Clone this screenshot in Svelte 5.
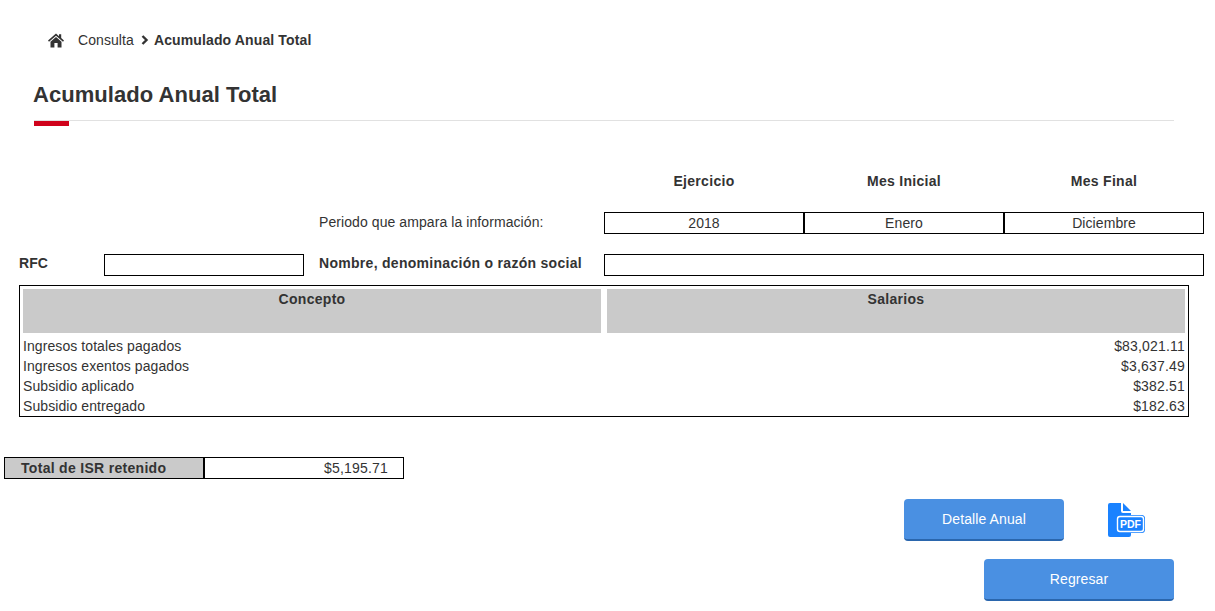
<script>
  let periodo = [
    { titulo: "Ejercicio", valor: "2018" },
    { titulo: "Mes Inicial", valor: "Enero" },
    { titulo: "Mes Final", valor: "Diciembre" },
  ];

  let filas = [
    { concepto: "Ingresos totales pagados", monto: "$83,021.11" },
    { concepto: "Ingresos exentos pagados", monto: "$3,637.49" },
    { concepto: "Subsidio aplicado", monto: "$382.51" },
    { concepto: "Subsidio entregado", monto: "$182.63" },
  ];
</script>

<div class="page">
  <nav class="breadcrumb">
    <svg class="home" viewBox="0 0 16 15" width="16" height="15">
      <path d="M8 0.5 L0 7.6 L1 8.8 L8 2.7 L15 8.8 L16 7.6 L13.2 5.1 V1.2 H11 V3.2 Z" fill="#333" />
      <path d="M8 4 L2.5 8.8 V14.5 H6.4 V10 H9.6 V14.5 H13.5 V8.8 Z" fill="#333" />
    </svg>
    <span class="link">Consulta</span>
    <svg class="chevron" viewBox="0 0 8 10" width="8" height="10">
      <path d="M1.5 1 L5.5 5 L1.5 9" fill="none" stroke="#333" stroke-width="2.4" />
    </svg>
    <strong>Acumulado Anual Total</strong>
  </nav>

  <h1>Acumulado Anual Total</h1>
  <div class="rule"><span></span></div>

  <div class="periodo-head">
    {#each periodo as p}
      <div class="col-title">{p.titulo}</div>
    {/each}
  </div>

  <div class="periodo-row">
    <div class="periodo-label">Periodo que ampara la información:</div>
    {#each periodo as p}
      <div class="box">{p.valor}</div>
    {/each}
  </div>

  <div class="rfc-row">
    <div class="rfc-label">RFC</div>
    <div class="box rfc-box"></div>
    <div class="nombre-label">Nombre, denominación o razón social</div>
    <div class="box nombre-box"></div>
  </div>

  <div class="tabla">
    <div class="tabla-head">
      <div>Concepto</div>
      <div>Salarios</div>
    </div>
    {#each filas as f}
      <div class="fila">
        <span>{f.concepto}</span>
        <span class="monto">{f.monto}</span>
      </div>
    {/each}
  </div>

  <div class="total">
    <div class="total-label">Total de ISR retenido</div>
    <div class="total-valor">$5,195.71</div>
  </div>

  <div class="acciones">
    <button class="btn detalle">Detalle Anual</button>
    <svg class="pdf" viewBox="0 0 37 34" width="37" height="34">
      <path d="M2 0 H13 V8 Q13 10 15 10 H23 V32 Q23 34 21 34 H2 Q0 34 0 32 V2 Q0 0 2 0 Z" fill="#1a82ff" />
      <path d="M15 0 L23 8 H15 Z" fill="#1a82ff" />
      <rect x="8" y="12" width="29" height="18" rx="3.5" fill="#1a82ff" />
      <rect x="9.5" y="13.5" width="26" height="15" rx="2.5" fill="#1a82ff" stroke="#fff" stroke-width="1.4" />
      <text x="22.5" y="25" text-anchor="middle" class="pdf-text">PDF</text>
    </svg>
  </div>

  <div class="regresar">
    <button class="btn">Regresar</button>
  </div>
</div>

<style>
  :global(body) {
    margin: 0;
    background: #fff;
  }

  .page {
    font-family: "Liberation Sans", Arial, sans-serif;
    font-size: 14px;
    letter-spacing: 0.08px;
    color: #333;
    height: 611px;
    overflow: hidden;
    box-sizing: border-box;
    padding-top: 32px;
  }

  .breadcrumb {
    display: flex;
    align-items: center;
    height: 16px;
    padding-left: 48px;
  }
  .home {
    margin-right: 14px;
  }
  .link {
    margin-right: 7px;
  }
  .chevron {
    margin-right: 5px;
  }
  .breadcrumb strong {
    letter-spacing: 0.13px;
  }

  h1 {
    margin: 34px 0 0 33px;
    font-size: 22px;
    line-height: 26px;
    font-weight: bold;
    letter-spacing: 0.05px;
  }

  .rule {
    margin: 12px 41px 0 34px;
    border-top: 1px solid #e1e1e1;
  }
  .rule span {
    display: block;
    width: 35px;
    height: 5px;
    background: #d0021b;
  }

  .periodo-head {
    display: flex;
    margin: 47px 0 0 604px;
  }
  .col-title {
    width: 200px;
    text-align: center;
    font-weight: bold;
    line-height: 16px;
    letter-spacing: 0.3px;
  }

  .periodo-row {
    display: flex;
    align-items: center;
    margin-top: 23px;
    padding-left: 319px;
  }
  .periodo-label {
    width: 285px;
    margin-top: -3px;
  }

  .box {
    box-sizing: border-box;
    width: 200px;
    height: 22px;
    line-height: 20px;
    border: 1px solid #000;
    text-align: center;
    background: #fff;
  }

  .rfc-row {
    display: flex;
    align-items: center;
    margin-top: 20px;
    padding-left: 19px;
    font-weight: bold;
  }
  .rfc-label {
    width: 85px;
    margin-top: -5px;
  }
  .nombre-label {
    width: 285px;
    margin-left: 15px;
    margin-top: -5px;
    letter-spacing: 0.29px;
  }
  .nombre-box {
    width: 600px;
  }

  .tabla {
    box-sizing: border-box;
    width: 1170px;
    margin: 9px 0 0 19px;
    padding: 3px 3px 0;
    border: 1px solid #000;
  }
  .tabla-head {
    display: grid;
    grid-template-columns: 1fr 1fr;
    column-gap: 6px;
    margin-bottom: 3px;
  }
  .tabla-head div {
    height: 44px;
    line-height: 20px;
    background: #cacaca;
    text-align: center;
    font-weight: bold;
    letter-spacing: 0.3px;
  }
  .fila {
    display: flex;
    justify-content: space-between;
    line-height: 20px;
  }
  .monto {
    letter-spacing: 0.18px;
  }

  .total {
    display: flex;
    margin: 40px 0 0 4px;
  }
  .total-label,
  .total-valor {
    box-sizing: border-box;
    width: 200px;
    height: 22px;
    line-height: 21px;
    border: 1px solid #000;
  }
  .total-label {
    background: #cacaca;
    font-weight: bold;
    padding-left: 16px;
    letter-spacing: 0.3px;
  }
  .total-valor {
    text-align: right;
    padding-right: 15px;
    letter-spacing: 0.18px;
  }

  .btn {
    display: block;
    height: 42px;
    padding: 0;
    border: none;
    border-bottom: 2px solid #2a66ad;
    border-radius: 4px;
    background: #4a90e2;
    color: #fff;
    font-family: inherit;
    font-size: 14px;
    letter-spacing: 0.1px;
    cursor: pointer;
  }

  .acciones {
    display: flex;
    align-items: flex-start;
    margin: 20px 0 0 904px;
  }
  .detalle {
    width: 160px;
  }
  .pdf {
    margin: 4px 0 0 44px;
  }
  .pdf-text {
    font-size: 10.5px;
    font-weight: bold;
    fill: #fff;
    font-family: "Liberation Sans", Arial, sans-serif;
  }

  .regresar {
    margin: 18px 0 0 984px;
  }
  .regresar .btn {
    width: 190px;
  }
</style>
